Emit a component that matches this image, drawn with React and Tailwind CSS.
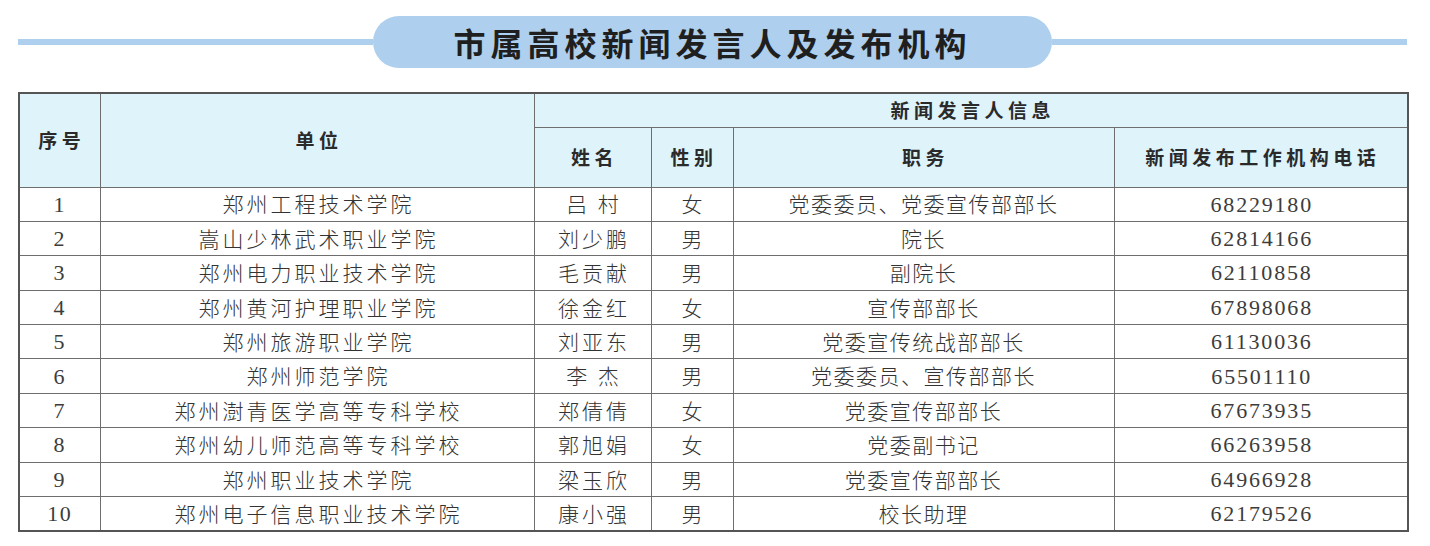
import React from "react";

const rows = [
  ["1", "郑州工程技术学院", "吕 村", "女", "党委委员、党委宣传部部长", "68229180"],
  ["2", "嵩山少林武术职业学院", "刘少鹏", "男", "院长", "62814166"],
  ["3", "郑州电力职业技术学院", "毛贡献", "男", "副院长", "62110858"],
  ["4", "郑州黄河护理职业学院", "徐金红", "女", "宣传部部长", "67898068"],
  ["5", "郑州旅游职业学院", "刘亚东", "男", "党委宣传统战部部长", "61130036"],
  ["6", "郑州师范学院", "李 杰", "男", "党委委员、宣传部部长", "65501110"],
  ["7", "郑州澍青医学高等专科学校", "郑倩倩", "女", "党委宣传部部长", "67673935"],
  ["8", "郑州幼儿师范高等专科学校", "郭旭娟", "女", "党委副书记", "66263958"],
  ["9", "郑州职业技术学院", "梁玉欣", "男", "党委宣传部部长", "64966928"],
  ["10", "郑州电子信息职业技术学院", "康小强", "男", "校长助理", "62179526"],
];

const cjk = "font-['Noto_Sans_CJK_SC',sans-serif]";
const num = "font-['Liberation_Serif','DejaVu_Serif',serif]";

export default function App() {
  return (
    <div className="w-[1430px] h-[546px] bg-white overflow-hidden">
      {/* title banner */}
      <div className="flex items-center pt-[16px] pl-[18px] pr-[23px]">
        <div className="flex-1 h-[6px] bg-[#aecfed]" />
        <div className={`w-[679px] h-[52px] rounded-full bg-[#aecfed] flex items-center justify-center ${cjk} text-[32px] font-semibold tracking-[5px] text-[#1f1f1f]`}>
          市属高校新闻发言人及发布机构
        </div>
        <div className="flex-1 h-[6px] bg-[#aecfed]" />
      </div>

      <div className="mt-[24px] ml-[18px] w-[1389px]">
        <table className="w-full border-collapse table-fixed border-2 border-[#555]">
          <colgroup>
            <col className="w-[81px]" />
            <col className="w-[434px]" />
            <col className="w-[117px]" />
            <col className="w-[82px]" />
            <col className="w-[381px]" />
            <col className="w-[294px]" />
          </colgroup>
          <thead className={`${cjk} text-[19px] tracking-[4.5px] text-[#2a2a2a] bg-[#dff3fb]`}>
            <tr className="h-[34px]">
              <th rowSpan={2} className="border border-[#6e6e6e] font-semibold pl-[4px]">序号</th>
              <th rowSpan={2} className="border border-[#6e6e6e] font-semibold pl-[4px]">单位</th>
              <th colSpan={4} className="border border-[#6e6e6e] font-semibold pl-[4px]">新闻发言人信息</th>
            </tr>
            <tr className="h-[60px]">
              <th className="border border-[#6e6e6e] font-semibold pl-[4px]">姓名</th>
              <th className="border border-[#6e6e6e] font-semibold pl-[4px]">性别</th>
              <th className="border border-[#6e6e6e] font-semibold pl-[4px]">职务</th>
              <th className="border border-[#6e6e6e] font-semibold pl-[4px]">新闻发布工作机构电话</th>
            </tr>
          </thead>
          <tbody className="text-[#333]">
            {rows.map((r) => (
              <tr key={r[0]} className="h-[34.4px]">
                <td className={`border border-[#6e6e6e] text-center text-[22px] tracking-[1.5px] text-[#3c3c3c] ${num}`}>{r[0]}</td>
                <td className={`border border-[#6e6e6e] text-center text-[21px] font-light tracking-[3px] pl-[3px] ${cjk}`}>{r[1]}</td>
                <td className={`border border-[#6e6e6e] text-center text-[21px] font-light tracking-[3px] pl-[3px] ${cjk}`}>{r[2]}</td>
                <td className={`border border-[#6e6e6e] text-center text-[21px] font-light ${cjk}`}>{r[3]}</td>
                <td className={`border border-[#6e6e6e] text-center text-[21px] font-light tracking-[1.5px] ${cjk}`}>{r[4]}</td>
                <td className={`border border-[#6e6e6e] text-center text-[22px] tracking-[1.8px] pl-[2px] text-[#3c3c3c] ${num}`}>{r[5]}</td>
              </tr>
            ))}
          </tbody>
        </table>
      </div>
    </div>
  );
}
